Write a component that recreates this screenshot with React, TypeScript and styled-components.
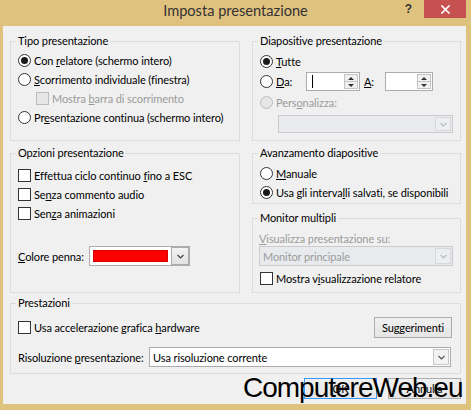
import React from "react";
import styled, { createGlobalStyle } from "styled-components";

const GlobalStyle = createGlobalStyle`
  html, body { margin: 0; padding: 0; }
  body {
    width: 471px; height: 410px; overflow: hidden;
    background: #e0c27f;
    font-family: Lato, "Liberation Sans", Arial, sans-serif;
    font-size: 11px; letter-spacing: -0.1px; color: #000;
  }
  * { box-sizing: border-box; }
`;

const Window = styled.div`
  position: relative;
  width: 471px;
  height: 410px;
  background: #e0c27f;
  display: flex;
  flex-direction: column;
`;

const TitleBar = styled.div`
  height: 26px;
  flex: none;
  display: grid;
  grid-template-columns: 1fr auto 1fr;
  align-items: start;
`;

const Title = styled.div`
  grid-column: 2;
  font-size: 14.6px;
  letter-spacing: 0;
  line-height: 22px;
  color: #333;
`;

const Controls = styled.div`
  grid-column: 3;
  justify-self: end;
  display: flex;
  align-items: flex-start;
  gap: 12px;
  margin-right: 5px;
`;

const Help = styled.span`
  font: bold 12px "Liberation Sans", Arial, sans-serif;
  color: #333;
  line-height: 18px;
`;

const CloseBtn = styled.div`
  width: 42px;
  height: 18px;
  background: #c75050;
  display: flex;
  align-items: center;
  justify-content: center;
`;

const Client = styled.div`
  flex: 1;
  margin: 0 5px 6px 3px;
  background: #f0f0f0;
  padding: 7px 5px 0 7px;
  display: flex;
  flex-direction: column;
`;

const Row = styled.div<{ $mt?: number }>`
  display: grid;
  grid-template-columns: 230px 209px;
  column-gap: 12px;
  margin-top: ${(p) => p.$mt ?? 0}px;
`;

const Stack = styled.div`
  display: flex;
  flex-direction: column;
  gap: 6px;
`;

const Group = styled.fieldset<{ $pb: number; $grow?: boolean }>`
  margin: 0;
  padding: 0 0 ${(p) => p.$pb}px 0;
  min-width: 0;
  border: 1px solid #dcdcdc;
  ${(p) => (p.$grow ? "flex: 1;" : "")}
`;

const Legend = styled.legend`
  margin-left: 5px;
  padding: 0 2px;
  line-height: 16px;
  font-size: 11px;
  color: #000;
`;

const Body = styled.div<{ $pt: number; $pr?: number }>`
  padding: ${(p) => p.$pt}px ${(p) => p.$pr ?? 7}px 0 7px;
  display: flex;
  flex-direction: column;
`;

const U = styled.span`
  text-decoration: underline;
  text-underline-offset: 1px;
`;

const Label = styled.span<{ $disabled?: boolean; $w?: number; $ml?: number }>`
  color: ${(p) => (p.$disabled ? "#9b9b9b" : "#000")};
  white-space: nowrap;
  margin-left: ${(p) => p.$ml ?? 0}px;
  ${(p) => (p.$w ? `width: ${p.$w}px; flex: none;` : "")}
`;

const Option = styled.div<{ $h?: number; $indent?: number; $mt?: number; $gap?: number }>`
  height: ${(p) => p.$h ?? 19}px;
  display: flex;
  align-items: center;
  gap: ${(p) => p.$gap ?? 3}px;
  margin-left: ${(p) => p.$indent ?? 0}px;
  margin-top: ${(p) => p.$mt ?? 0}px;
`;

const RadioCircle = styled.span<{ $checked?: boolean; $disabled?: boolean }>`
  width: 13px;
  height: 13px;
  border-radius: 50%;
  flex: none;
  border: 1px solid ${(p) => (p.$disabled ? "#bcbcbc" : "#333")};
  background: ${(p) => (p.$disabled ? "#e6e6e6" : "#fff")};
  display: flex;
  align-items: center;
  justify-content: center;
  &::after {
    content: "";
    width: 7px;
    height: 7px;
    border-radius: 50%;
    background: #1a1a1a;
    display: ${(p) => (p.$checked ? "block" : "none")};
  }
`;

const CheckSquare = styled.span<{ $disabled?: boolean }>`
  width: 13px;
  height: 13px;
  flex: none;
  border: 1px solid ${(p) => (p.$disabled ? "#bcbcbc" : "#333")};
  background: ${(p) => (p.$disabled ? "#e6e6e6" : "#fff")};
`;

const Spin = styled.div<{ $w: number }>`
  width: ${(p) => p.$w}px;
  height: 19px;
  flex: none;
  border: 1px solid #acacac;
  background: #fff;
  display: flex;
  padding: 1px;
`;

const SpinText = styled.div`
  flex: 1;
  display: flex;
  align-items: center;
  padding-left: 4px;
`;

const Caret = styled.span`
  width: 1px;
  height: 13px;
  background: #000;
`;

const SpinButtons = styled.div`
  width: 14px;
  display: flex;
  flex-direction: column;
  border: 1px solid #c4c4c4;
  background: #f0f0f0;
`;

const SpinHalf = styled.div<{ $down?: boolean }>`
  flex: 1;
  display: flex;
  align-items: center;
  justify-content: center;
  ${(p) => (p.$down ? "border-top: 1px solid #c4c4c4;" : "")}
  &::after {
    content: "";
    border-left: 3px solid transparent;
    border-right: 3px solid transparent;
    ${(p) => (p.$down ? "border-top: 3px solid #333;" : "border-bottom: 3px solid #333;")}
  }
`;

const Combo = styled.div<{ $disabled?: boolean; $h: number; $ml?: number; $mt?: number; $mr?: number; $grow?: boolean }>`
  height: ${(p) => p.$h}px;
  display: flex;
  flex: ${(p) => (p.$grow ? 1 : "none")};
  margin: ${(p) => p.$mt ?? 0}px ${(p) => p.$mr ?? 0}px 0 ${(p) => p.$ml ?? 0}px;
  border: 1px solid ${(p) => (p.$disabled ? "#c9cbce" : "#acacac")};
  background: ${(p) => (p.$disabled ? "#e8eaed" : "#fff")};
`;

const ComboText = styled.div<{ $disabled?: boolean }>`
  flex: 1;
  padding-left: 3px;
  display: flex;
  align-items: center;
  color: ${(p) => (p.$disabled ? "#9b9b9b" : "#000")};
  white-space: nowrap;
`;

const ComboArrow = styled.div<{ $disabled?: boolean }>`
  width: 16px;
  margin: 1px;
  border: 1px solid ${(p) => (p.$disabled ? "#d6d8db" : "#c8c8c8")};
  background: ${(p) => (p.$disabled ? "#eceef0" : "#f2f2f2")};
  display: flex;
  align-items: center;
  justify-content: center;
`;

const ColorPicker = styled.div`
  width: 101px;
  height: 20px;
  flex: none;
  border: 1px solid #acacac;
  background: #fff;
  display: flex;
  align-items: center;
  padding-left: 3px;
`;

const Swatch = styled.div`
  width: 75px;
  height: 12px;
  background: #ff0000;
  border: 1px solid #d40000;
`;

const ColorDrop = styled.div`
  width: 18px;
  height: 18px;
  margin-left: auto;
  border: 1px solid #acacac;
  background: linear-gradient(#f2f2f2, #e2e2e2);
  display: flex;
  align-items: center;
  justify-content: center;
`;

const SpaceRow = styled.div`
  display: flex;
  align-items: center;
  justify-content: space-between;
  height: 21px;
`;

const Button = styled.div<{ $w: number; $default?: boolean }>`
  width: ${(p) => p.$w}px;
  height: 21px;
  flex: none;
  border: 1px solid ${(p) => (p.$default ? "#3399ff" : "#acacac")};
  background: linear-gradient(#f0f0f0, #e5e5e5);
  display: flex;
  align-items: center;
  justify-content: center;
  color: #000;
`;

const ButtonRow = styled.div`
  display: flex;
  justify-content: flex-end;
  gap: 11px;
  margin-top: 4px;
`;

const PerfGroup = styled(Group)`
  margin-top: 2px;
  width: 451px;
`;

const Watermark = styled.div`
  position: absolute;
  left: 243px;
  top: 374px;
  font-family: "Liberation Sans", Arial, sans-serif;
  font-size: 28px;
  line-height: 1;
  letter-spacing: -1px;
  color: #000;
  white-space: nowrap;
`;

const Chevron = ({ color }: { color: string }) => (
  <svg width="7" height="5" viewBox="0 0 7 5">
    <polyline points="0.5,1 3.5,4 6.5,1" fill="none" stroke={color} strokeWidth="1.2" />
  </svg>
);

const CloseIcon = () => (
  <svg width="9" height="9" viewBox="0 0 9 9">
    <path d="M1 1 L8 8 M8 1 L1 8" stroke="#fff" strokeWidth="1.6" strokeLinecap="square" />
  </svg>
);

type OptProps = { checked?: boolean; disabled?: boolean; children: React.ReactNode; indent?: number; h?: number };

const Radio = ({ checked, disabled, children, h }: OptProps) => (
  <Option $h={h}>
    <RadioCircle $checked={checked} $disabled={disabled} />
    <Label $disabled={disabled}>{children}</Label>
  </Option>
);

const Check = ({ disabled, children, indent, h }: OptProps) => (
  <Option $indent={indent} $h={h}>
    <CheckSquare $disabled={disabled} />
    <Label $disabled={disabled}>{children}</Label>
  </Option>
);

export default function App() {
  return (
    <>
      <GlobalStyle />
      <Window>
        <TitleBar>
          <Title>Imposta presentazione</Title>
          <Controls>
            <Help>?</Help>
            <CloseBtn>
              <CloseIcon />
            </CloseBtn>
          </Controls>
        </TitleBar>
        <Client>
          <Row>
            <Group $pb={13}>
              <Legend>Tipo presentazione</Legend>
              <Body $pt={2}>
                <Radio checked>
                  Con <U>r</U>elatore (schermo intero)
                </Radio>
                <Radio>
                  <U>S</U>corrimento individuale (finestra)
                </Radio>
                <Check disabled indent={18}>
                  Mostra <U>b</U>arra di scorrimento
                </Check>
                <Radio>
                  Pr<U>e</U>sentazione continua (schermo intero)
                </Radio>
              </Body>
            </Group>
            <Group $pb={7}>
              <Legend>Diapositive presentazione</Legend>
              <Body $pt={2}>
                <Radio checked h={20}>
                  <U>T</U>utte
                </Radio>
                <Option $h={21}>
                  <RadioCircle />
                  <Label $w={27}>
                    <U>D</U>a:
                  </Label>
                  <Spin $w={54}>
                    <SpinText>
                      <Caret />
                    </SpinText>
                    <SpinButtons>
                      <SpinHalf />
                      <SpinHalf $down />
                    </SpinButtons>
                  </Spin>
                  <Label $w={18} $ml={1}>
                    <U>A</U>:
                  </Label>
                  <Spin $w={48}>
                    <SpinText />
                    <SpinButtons>
                      <SpinHalf />
                      <SpinHalf $down />
                    </SpinButtons>
                  </Spin>
                </Option>
                <Radio disabled h={20}>
                  Pers<U>o</U>nalizza:
                </Radio>
                <Combo $disabled $h={18} $ml={18} $mt={3}>
                  <ComboText $disabled />
                  <ComboArrow $disabled>
                    <Chevron color="#b8bcc2" />
                  </ComboArrow>
                </Combo>
              </Body>
            </Group>
          </Row>

          <Row $mt={4}>
            <Group $pb={26}>
              <Legend>Opzioni presentazione</Legend>
              <Body $pt={5}>
                <Check>
                  Effettua ciclo continuo <U>f</U>ino a ESC
                </Check>
                <Check>
                  Se<U>n</U>za commento audio
                </Check>
                <Check>
                  Sen<U>z</U>a animazioni
                </Check>
                <Option $h={20} $mt={23} $gap={0}>
                  <Label $w={71}>
                    <U>C</U>olore penna:
                  </Label>
                  <ColorPicker>
                    <Swatch />
                    <ColorDrop>
                      <Chevron color="#444" />
                    </ColorDrop>
                  </ColorPicker>
                </Option>
              </Body>
            </Group>
            <Stack>
              <Group $pb={1}>
                <Legend>Avanzamento diapositive</Legend>
                <Body $pt={3}>
                  <Radio>
                    <U>M</U>anuale
                  </Radio>
                  <Radio checked>
                    Usa gli interva<U>l</U>li salvati, se disponibili
                  </Radio>
                </Body>
              </Group>
              <Group $pb={4} $grow>
                <Legend>Monitor multipli</Legend>
                <Body $pt={4}>
                  <Option $h={16} $indent={-1}>
                    <Label $disabled>
                      <U>V</U>isualizza presentazione su:
                    </Label>
                  </Option>
                  <Combo $disabled $h={20} $ml={-1}>
                    <ComboText $disabled>Monitor principale</ComboText>
                    <ComboArrow $disabled>
                      <Chevron color="#b8bcc2" />
                    </ComboArrow>
                  </Combo>
                  <Option $h={20} $mt={2}>
                    <CheckSquare />
                    <Label>
                      Mostra v<U>i</U>sualizzazione relatore
                    </Label>
                  </Option>
                </Body>
              </Group>
            </Stack>
          </Row>

          <PerfGroup $pb={6}>
            <Legend>Prestazioni</Legend>
            <Body $pt={6} $pr={8}>
              <SpaceRow>
                <Option $h={21}>
                  <CheckSquare />
                  <Label>
                    Usa accelerazione grafica <U>h</U>ardware
                  </Label>
                </Option>
                <Button $w={78}>
                  Su<U>g</U>gerimenti
                </Button>
              </SpaceRow>
              <Option $h={20} $mt={9} $gap={0}>
                <Label $w={131}>
                  Risoluzione <U>p</U>resentazione:
                </Label>
                <Combo $h={20} $grow $mr={1}>
                  <ComboText>Usa risoluzione corrente</ComboText>
                  <ComboArrow>
                    <Chevron color="#555" />
                  </ComboArrow>
                </Combo>
              </Option>
            </Body>
          </PerfGroup>

          <ButtonRow>
            <Button $w={73} $default>
              OK
            </Button>
            <Button $w={73}>Annulla</Button>
          </ButtonRow>
        </Client>
        <Watermark>ComputereWeb.eu</Watermark>
      </Window>
    </>
  );
}
